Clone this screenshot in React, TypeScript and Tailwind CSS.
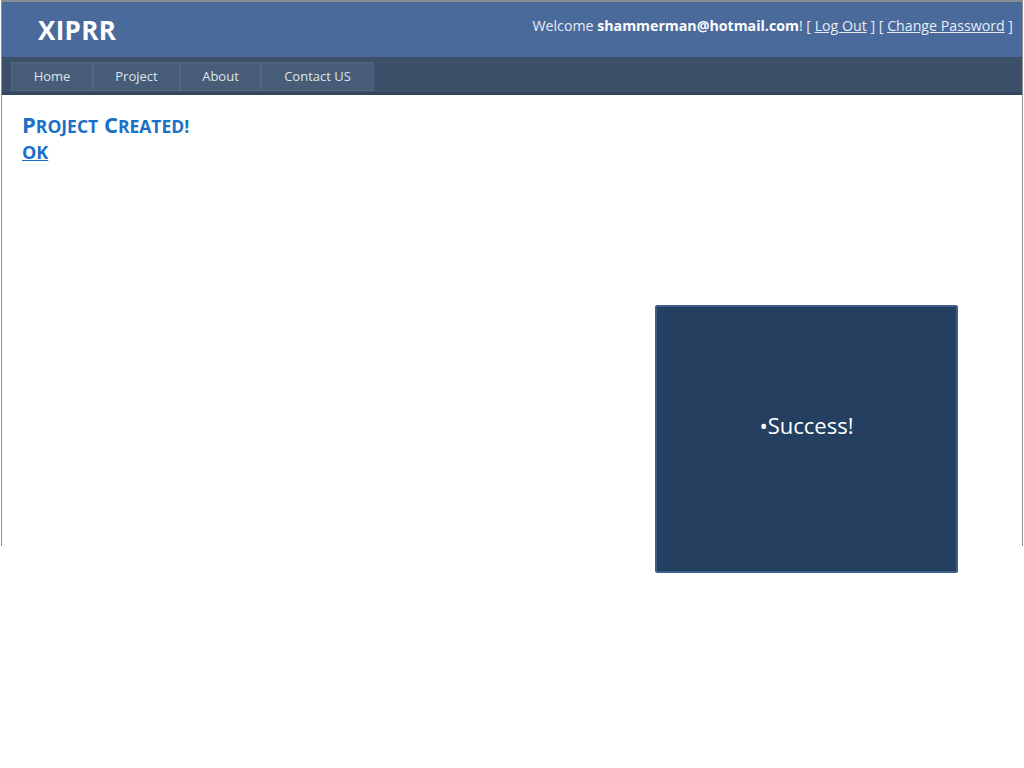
import React from 'react';

const navItems = [
  { label: 'Home', w: 'w-[82px]' },
  { label: 'Project', w: 'w-[87px]' },
  { label: 'About', w: 'w-[81px]' },
  { label: 'Contact US', w: 'w-[113px]' },
];

const App: React.FC = () => {
  return (
    <div className="relative w-[1024px] h-[768px] bg-white overflow-hidden" style={{ fontFamily: '"Open Sans", "Noto Sans", sans-serif' }}>
      {/* page frame */}
      <div className="ml-[1px] w-[1022px] h-[546px] border-t-2 border-x border-[#8a8f96] flex flex-col">
        {/* header */}
        <div className="h-[55px] bg-[#4a6a9c] flex items-start justify-between">
          <div className="pl-[36px] pt-[15px] text-white text-[26px] font-bold leading-none tracking-[0.3px]">
            XIPRR
          </div>
          <div className="pr-[9px] pt-[17px] text-[14.2px] text-[#e8edf4] leading-none">
            Welcome <span className="font-bold text-white">shammerman@hotmail.com</span>! [ <span className="underline">Log Out</span> ] [ <span className="underline">Change Password</span> ]
          </div>
        </div>
        {/* nav */}
        <div className="h-[38px] bg-[#3c5169] pl-[9px] pt-[5px] border-b-[3px] border-[#33465b]">
          <div className="flex h-[29px]">
            {navItems.map(item => (
              <div
                key={item.label}
                className={`${item.w} h-full bg-[#475d77] border border-[#52687f] flex items-center justify-center text-[13px] text-[#dde4ec]`}
              >
                {item.label}
              </div>
            ))}
          </div>
        </div>
        {/* content */}
        <div className="flex-1 pl-[20px] pt-[16px]">
          <div className="text-[#1a6fc7] font-bold text-[22px] leading-[27px]">
            P<span className="text-[17.5px]">ROJECT</span> C<span className="text-[17.5px]">REATED!</span>
          </div>
          <div className="text-[#1a6fc7] font-bold text-[18px] leading-[24px] underline">OK</div>
        </div>
      </div>

      {/* success box */}
      <div className="absolute left-[655px] top-[305px] w-[303px] h-[268px] bg-[#243f60] border-2 border-[#3d5f8c] rounded-[2px] flex justify-center">
        <div className="mt-[107px] text-white text-[22px] leading-none">•Success!</div>
      </div>
    </div>
  );
};

export default App;
